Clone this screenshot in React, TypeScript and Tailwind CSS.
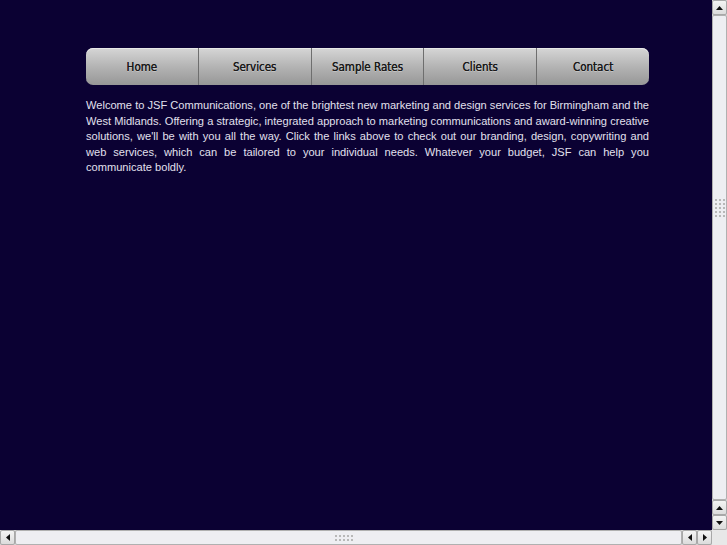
import React from "react";

const Up = () => (
  <svg width="7" height="4" viewBox="0 0 7 4"><path d="M0 4 L3.5 0 L7 4 Z" fill="#111" /></svg>
);
const Down = () => (
  <svg width="7" height="4" viewBox="0 0 7 4"><path d="M0 0 L3.5 4 L7 0 Z" fill="#111" /></svg>
);
const Left = () => (
  <svg width="4" height="7" viewBox="0 0 4 7"><path d="M4 0 L0 3.5 L4 7 Z" fill="#111" /></svg>
);
const Right = () => (
  <svg width="4" height="7" viewBox="0 0 4 7"><path d="M0 0 L4 3.5 L0 7 Z" fill="#111" /></svg>
);

const Btn = ({ children }: { children: React.ReactNode }) => (
  <div className="w-[15px] h-[15px] shrink-0 flex items-center justify-center bg-gradient-to-b from-[#f4f4f4] to-[#dcdcdc] border border-[#a8a8a8] rounded-[2px]">
    {children}
  </div>
);

const Dots = ({ cols, n }: { cols: string; n: number }) => (
  <div className={cols}>
    {Array.from({ length: n }).map((_, i) => (
      <div key={i} className="w-[2px] h-[2px] bg-[#b8b8b8]" />
    ))}
  </div>
);

const lines = [
  "Welcome to JSF Communications, one of the brightest new marketing and design services for Birmingham and the",
  "West Midlands. Offering a strategic, integrated approach to marketing communications and award-winning creative",
  "solutions, we'll be with you all the way. Click the links above to check out our branding, design, copywriting and",
  "web services, which can be tailored to your individual needs. Whatever your budget, JSF can help you",
  "communicate boldly.",
];

export default function App() {
  const items = ["Home", "Services", "Sample Rates", "Clients", "Contact"];
  return (
    <div className="w-[727px] h-[545px] flex flex-col overflow-hidden" style={{ fontFamily: '"Liberation Sans", Arial, sans-serif' }}>
      <div className="flex flex-1 min-h-0">
        <div className="flex-1 bg-[#0b0133] pt-[48px] pl-[86px]">
          <div className="w-[563px]">
            <nav className="flex h-[37px] rounded-[7px] overflow-hidden bg-gradient-to-b from-[#d6d6d6] via-[#b4b4b4] to-[#979797] shadow-[inset_0_1px_0_#e8e8e8]">
              {items.map((t, i) => (
                <div
                  key={t}
                  className={
                    "flex-1 flex items-center justify-center pt-[3px] text-[11.5px] text-[#1a1a1a] [text-shadow:0_0_0.4px_#1a1a1a,0_1px_0_rgba(255,255,255,0.3)] " +
                    (i > 0 ? "border-l border-[#6e6e6e]" : "")
                  }
                  style={{ fontFamily: '"DejaVu Sans Condensed", "DejaVu Sans", sans-serif', fontStretch: "condensed" }}
                >
                  {t}
                </div>
              ))}
            </nav>
            <div className="mt-[13px] text-[11.1px] leading-[15.5px] text-[#e2e0ee]">
              {lines.map((l, i) => (
                <p
                  key={i}
                  className={i < lines.length - 1 ? "whitespace-nowrap text-justify [text-align-last:justify]" : "whitespace-nowrap"}
                >
                  {l}
                </p>
              ))}
            </div>
          </div>
        </div>
        <div className="w-[15px] flex flex-col bg-[#d4d4d4]">
          <Btn><Up /></Btn>
          <div className="flex-1 flex items-center justify-center bg-[#eeeef2] border border-[#b0b0b0] rounded-[2px]">
            <div className="-mt-[100px]"><Dots cols="grid grid-cols-3 gap-[2px]" n={15} /></div>
          </div>
          <Btn><Up /></Btn>
          <Btn><Down /></Btn>
        </div>
      </div>
      <div className="h-[15px] flex bg-[#d4d4d4]">
        <Btn><Left /></Btn>
        <div className="flex-1 flex items-center justify-center bg-[#eeeef2] border border-[#b0b0b0] rounded-[2px]">
          <div className="-ml-[10px]"><Dots cols="grid grid-cols-5 gap-[2px]" n={10} /></div>
        </div>
        <Btn><Left /></Btn>
        <Btn><Right /></Btn>
        <div className="w-[15px] bg-[#e8e8e8]" />
      </div>
    </div>
  );
}
